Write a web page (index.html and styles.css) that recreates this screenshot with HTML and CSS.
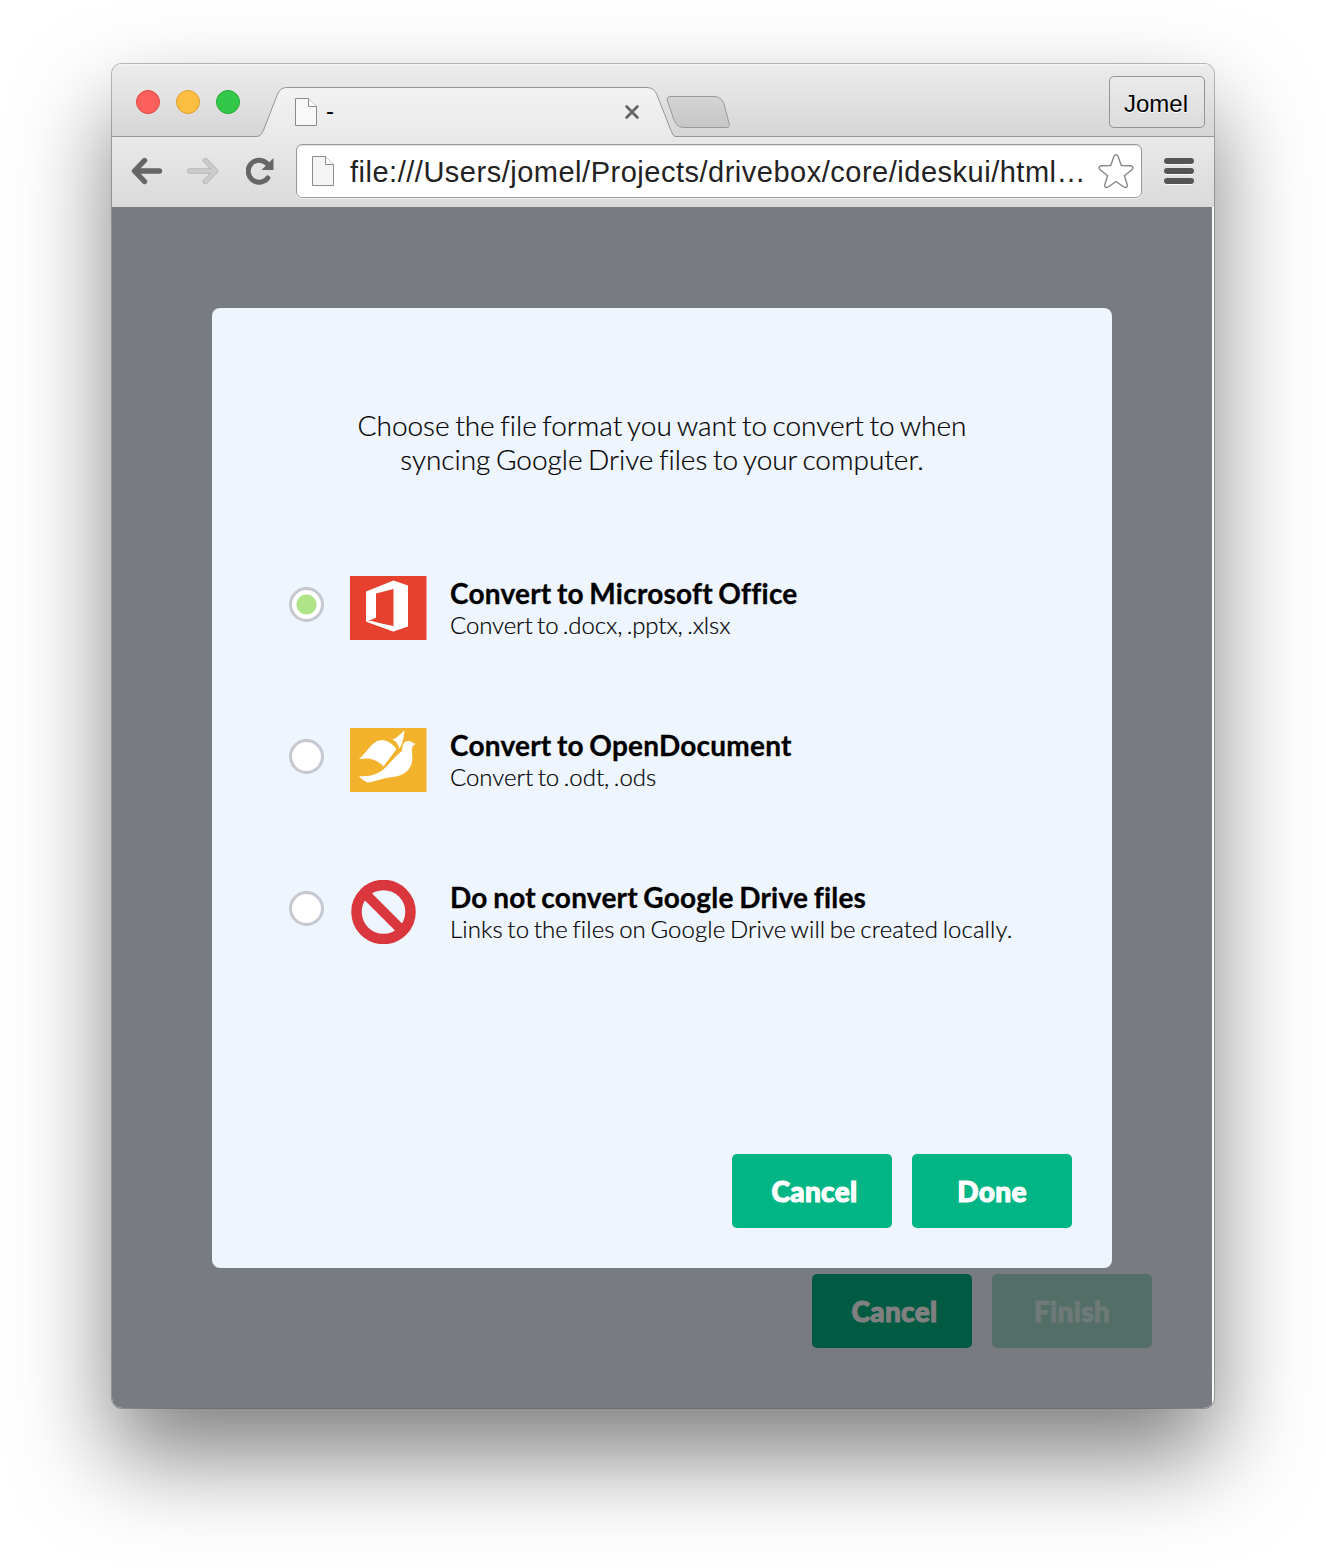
FILE: index.html
```html
<!DOCTYPE html>
<html lang="en">
<head>
<meta charset="utf-8">
<title>-</title>
<link rel="stylesheet" href="styles.css">
</head>
<body>
<main class="window">
  <header class="tabstrip">
    <div class="lights"><i class="light red"></i><i class="light yellow"></i><i class="light green"></i></div>
    <div class="tab">
      <svg class="tab-shape" width="420" height="50" viewBox="0 0 420 50">
        <defs><linearGradient id="tabfill" x1="0" y1="0" x2="0" y2="1"><stop offset="0" stop-color="#f3f3f3"/><stop offset="1" stop-color="#e9e9e9"/></linearGradient></defs>
        <path d="M0 49.5C5 49.5 6 46 8 42L20 11C23 3 25 .5 32 .5H390C396 .5 399 3 401 8L414 41C416 46 417 49.5 420 49.5V50H0Z" fill="url(#tabfill)"/>
        <path d="M0 49.5C5 49.5 6 46 8 42L20 11C23 3 25 .5 32 .5H390C396 .5 399 3 401 8L414 41C416 46 417 49.5 420 49.5" fill="none" stroke="#949494"/>
      </svg>
      <svg class="page-icon" width="24" height="30" viewBox="0 0 24 30"><path d="M1.5 1.5H14.5L22.5 9.5V28.5H1.5Z" fill="#f8f8f8" stroke="#8b8b8b"/><path d="M14.5 1.5V9.5H22.5" fill="#fff" stroke="#8b8b8b"/></svg>
      <span class="tab-title">-</span>
      <svg class="close" width="16" height="16" viewBox="0 0 16 16"><path d="M2.6 2.6L13.4 13.4M13.4 2.6L2.6 13.4" stroke="#666" stroke-width="2.800" stroke-linecap="round"/></svg>
    </div>
    <svg class="new-tab" width="66" height="34" viewBox="0 0 66 34"><defs><linearGradient id="newfill" x1="0" y1="0" x2="0" y2="1"><stop offset="0" stop-color="#d4d4d4"/><stop offset="1" stop-color="#c6c6c6"/></linearGradient></defs><path d="M5 1.500H49C54 1.500 57 4 59 9L64 28C65 30.500 64.500 32.500 61.500 32.500H20C14 32.500 11 30 9 25L2.500 6C1.800 3.500 2.500 1.500 5 1.500Z" fill="url(#newfill)" stroke="#999"/></svg>
    <div class="profile">Jomel</div>
  </header>
  <nav class="toolbar">
    <svg class="back" width="32" height="28" viewBox="0 0 32 28"><path d="M28.500 14H4M13.500 3.500L3.500 14L13.500 24.500" fill="none" stroke="#666" stroke-width="5.400" stroke-linecap="round" stroke-linejoin="round"/></svg>
    <svg class="forward" width="32" height="28" viewBox="0 0 32 28"><path d="M3 14H28M18.500 3.500L28.500 14L18.500 24.500" fill="none" stroke="#b5b5b5" stroke-width="5.400" stroke-linecap="round" stroke-linejoin="round"/><path d="M3 14H28M18.500 3.500L28.500 14L18.500 24.500" fill="none" stroke="#ccc" stroke-width="3.600" stroke-linecap="round" stroke-linejoin="round"/></svg>
    <svg class="reload" width="28" height="28" viewBox="0 0 28 28"><path d="M21.800 21A11 11 0 1 1 21 6.500" fill="none" stroke="#666" stroke-width="5" stroke-linecap="round"/><path d="M27.500 1V13H15.500Z" fill="#666"/></svg>
    <div class="address">
      <svg width="24" height="32" viewBox="0 0 24 32"><path d="M1.500 1.500H14.500L22.500 9.500V30.500H1.500Z" fill="#f5f5f5" stroke="#8b8b8b"/><path d="M14.500 1.500V9.500H22.500" fill="#fff" stroke="#8b8b8b"/></svg>
      <span class="url">file:///Users/jomel/Projects/drivebox/core/ideskui/html…</span>
      <svg class="star" width="36" height="36" viewBox="0 0 36 36"><path d="M16 3.200Q18 .3 20 3.200L23.300 12.500L33 12.800Q36.200 13.800 34 16.700L26.400 22.700L29.300 32Q29.500 35.300 26.200 34.200L18 28.500L9.800 34.200Q6.500 35.300 6.700 32L9.600 22.700L2 16.700Q-.2 13.800 3 12.800L12.700 12.500Z" fill="#fff" stroke="#858585" stroke-width="1.400" stroke-linejoin="round"/></svg>
    </div>
    <div class="menu"><i></i><i></i><i></i></div>
  </nav>
  <section class="page">
    <div class="dialog">
      <p class="intro">Choose the file format you want to convert to when<br>syncing Google Drive files to your computer.</p>
      <div class="options">
        <div class="option">
          <i class="radio selected"></i>
          <svg class="logo" width="77" height="64" viewBox="0 0 77 64"><path d="M0 0H76.500V64H0Z" fill="#e6402e"/><path fill="#fff" d="M16 15.500L43.500 4.500L58 9.500V50.500L43.500 55.500L16 45.500L26 41.500V17.500L43.500 13V49.500L26 46.200L16 45.500Z"/><path d="M26 17.500L43.500 13V50L17.500 45.300L26 41.800Z" fill="#e6402e"/><path d="M16 45.500L21 44.800L43.500 50.800V55.500Z" fill="#fff"/></svg>
          <div class="copy"><strong>Convert to Microsoft Office</strong><span class="formats">Convert to .docx, .pptx, .xlsx</span></div>
        </div>
        <div class="option">
          <i class="radio"></i>
          <svg class="logo" width="77" height="64" viewBox="0 0 77 64"><path d="M0 0H76.500V64H0Z" fill="#f2b22b"/><path fill="#fff" d="M9 31C15 26 20 17 27 13C34 11 40 13 46.500 21L33.500 38.500C28 32 20 29 9 31ZM54.500 2.500C54 8 53 15 49.500 20.500C48 16 46 13 42.500 11.500C47 10 50 6 54.500 2.500ZM52 23C52 17 54 13 58 13C61 13 63 15 65.500 16C62 18 61.500 20 62 25C64 38 58 47 43 49C32 50 25 54 17.500 54.500C14 53 11 51 9 48C20 49 29 46 35.500 39.500C41 34 46 27 52 23Z"/></svg>
          <div class="copy"><strong>Convert to OpenDocument</strong><span>Convert to .odt, .ods</span></div>
        </div>
        <div class="option">
          <i class="radio"></i>
          <svg class="logo" width="77" height="64" viewBox="0 0 77 64"><path d="M15.500 14L51.500 50" stroke="#d9363e" stroke-width="10"/><circle cx="33.500" cy="32" r="27" fill="none" stroke="#d9363e" stroke-width="10.500"/></svg>
          <div class="copy"><strong>Do not convert Google Drive files</strong><span class="note">Links to the files on Google Drive will be created locally.</span></div>
        </div>
      </div>
      <div class="actions"><button class="btn cancel">Cancel</button><button class="btn">Done</button></div>
    </div>
    <div class="actions page-actions"><button class="btn cancel dim">Cancel</button><button class="btn disabled">Finish</button></div>
  </section>
</main>
</body>
</html>
```
FILE: styles.css
```css
* { box-sizing: border-box; }
body { margin: 0; height: 1568px; padding: 64px 112px 0; background: #fff; overflow: hidden; font-family: Lato, sans-serif; color: #000; }
svg { display: block; flex: none; }
.window { width: 1102px; height: 1344px; border-radius: 10px; overflow: hidden; box-shadow: 0 0 0 1px rgba(0,0,0,.25), 0 48px 94px rgba(0,0,0,.5); }
.tabstrip { display: flex; height: 73px; background: linear-gradient(#ececec, #d6d6d6); border-bottom: 1px solid #949494; box-shadow: inset 0 2px 0 #f3f3f3; font-family: "Liberation Sans", Arial, sans-serif; }
.lights { display: flex; gap: 16px; padding: 26px 0 0 24px; width: 144px; }
.light { width: 24px; height: 24px; border-radius: 50%; border: 1px solid; }
.red { background: #fc605b; border-color: #e24642; }
.yellow { background: #fdbe41; border-color: #dfa033; }
.green { background: #34c84a; border-color: #23ab33; }
.tab { position: relative; width: 420px; height: 50px; margin-top: 23px; display: flex; align-items: flex-start; padding: 10px 0 0 38px; }
.tab-shape { position: absolute; left: 0; top: 0; }
.page-icon, .tab-title, .close { position: relative; }
.tab-title { font-size: 24px; line-height: 28px; margin-left: 8px; }
.close { margin: 7px 0 0 290px; }
.new-tab { margin: 31px 0 0 -11px; }
.profile { margin: 12px 9px 0 auto; padding-right: 2px; width: 96px; height: 52px; border: 1px solid #949494; border-radius: 5px; text-align: center; font-size: 24px; line-height: 54px; background: linear-gradient(#ebebeb, #dcdcdc); text-shadow: 0 1px 0 #fff; }
.toolbar { display: flex; align-items: center; height: 70px; padding: 0 20px 2px 19px; background: linear-gradient(#e9e9e9, #dadada); }
.forward { margin-left: 24px; }
.reload { margin-left: 27px; }
.address { display: flex; align-items: center; width: 846px; height: 54px; margin-left: 22px; padding: 0 7px 0 14px; border: 1px solid #999; border-radius: 6px; background: #fff; box-shadow: inset 0 1px 1px #ddd, 0 1px 0 #f5f5f5; font-family: "Liberation Sans", Arial, sans-serif; font-size: 29px; color: #222; }
.url { margin-left: 15px; padding-top: 3px; white-space: nowrap; letter-spacing: .51px; }
.star { margin-left: auto; }
.menu { display: flex; flex-direction: column; gap: 4px; margin-left: 22px; }
.menu i { width: 30px; height: 6px; border-radius: 3px; background: #555; box-shadow: 0 1px 0 #f8f8f8; }
.page { height: 1201px; padding: 101px 100px 0; background: #787b80; border-right: 2px solid #fff; }
.dialog { display: flex; flex-direction: column; width: 900px; height: 960px; padding: 100px 40px 40px; border-radius: 8px; background: #eef5fd; }
.intro { margin: 0; text-align: center; font-weight: 300; font-size: 28px; line-height: 34px; white-space: nowrap; word-spacing: -2px; letter-spacing: -.02px; -webkit-text-stroke: .2px #000; }
.options { display: grid; gap: 88px; margin: 100px 0 0 37px; }
.option { display: flex; height: 64px; }
.radio { width: 35px; height: 35px; margin-top: 11px; border: 3px solid #c5c8d0; border-radius: 50%; background: #fff; }
.selected { background: radial-gradient(circle, #afe388 0 9.500px, #fff 10.500px); }
.logo { margin-left: 26px; }
.copy { display: flex; flex-direction: column; margin-left: 23px; white-space: nowrap; }
.copy strong { font-size: 28px; line-height: 34px; letter-spacing: .22px; word-spacing: -1.5px; -webkit-text-stroke: .3px #000; }
.copy span { font-size: 24px; line-height: 29px; font-weight: 300; word-spacing: -2px; letter-spacing: -.02px; -webkit-text-stroke: .2px #000; }
.copy .formats { letter-spacing: -.1px; }
.copy .note { letter-spacing: .09px; }
.actions { display: flex; justify-content: flex-end; gap: 20px; margin-top: auto; }
.btn { width: 160px; height: 74px; padding: 0; border: 0; border-radius: 5px; background: #02b585; color: #fff; font: 900 28px/74px Lato, sans-serif; -webkit-text-stroke: 1.1px currentColor; letter-spacing: .3px; }
.cancel { padding-left: 5px; }
.page-actions { margin: 6px -40px 0 0; }
.dim { background: #015b43; color: #808080; }
.disabled { background: #536e67; color: #6d7a77; }
```
